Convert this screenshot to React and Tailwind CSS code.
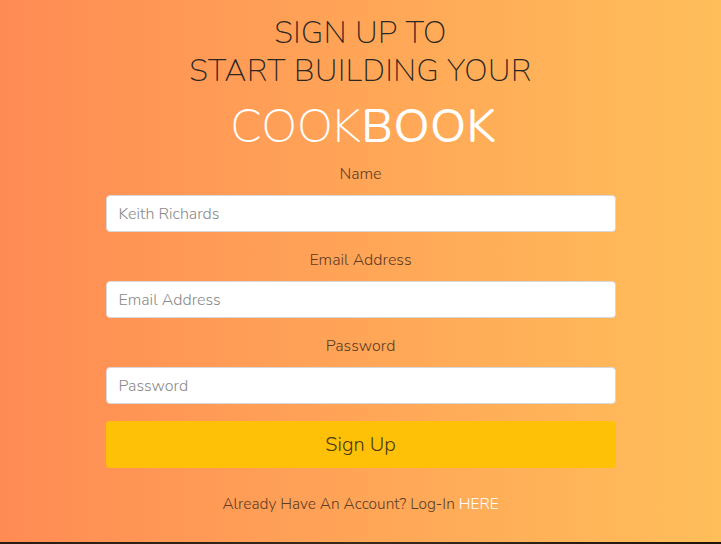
import { useState } from 'react';

export default function App() {
  const [name, setName] = useState('');
  const [email, setEmail] = useState('');
  const [password, setPassword] = useState('');

  return (
    <div
      className="min-h-[544px] flex flex-col bg-gradient-to-r from-[#ff8b54] to-[#ffbe5a]"
      style={{ fontFamily: 'Nunito, Lato, "Open Sans", sans-serif' }}
    >
      <div className="flex-1 flex flex-col items-center pt-[14px]">
        {/* heading */}
        <h1 className="text-center text-[31px] leading-[38px] font-extralight text-[#2a2622] tracking-[0.5px]">
          SIGN UP TO
          <br />
          START BUILDING YOUR
        </h1>
        <div className="mt-[10px] ml-[6px] text-[47px] leading-[54px] text-white tracking-[0.5px]">
          <span className="font-extralight">COOK</span>
          <span className="font-normal">BOOK</span>
        </div>

        <form className="w-[510px] mt-[10px] flex flex-col" onSubmit={(e) => e.preventDefault()}>
          {/* Name */}
          <label className="block text-center text-[16px] leading-[20px] font-light text-[#5e3c25] mb-[11px]">
            Name
          </label>
          <input
            type="text"
            value={name}
            onChange={(e) => setName(e.target.value)}
            placeholder="Keith Richards"
            className="w-full h-[37px] px-[12px] bg-white rounded-[4px] border border-[#d8d8d8] text-[16px] font-light text-[#333] placeholder:text-[#8a8a8a] outline-none"
          />

          {/* Email */}
          <label className="block text-center text-[16px] leading-[20px] font-light text-[#5e3c25] mt-[18px] mb-[11px]">
            Email Address
          </label>
          <input
            type="email"
            value={email}
            onChange={(e) => setEmail(e.target.value)}
            placeholder="Email Address"
            className="w-full h-[37px] px-[12px] bg-white rounded-[4px] border border-[#d8d8d8] text-[16px] font-light text-[#333] placeholder:text-[#8a8a8a] outline-none"
          />

          {/* Password */}
          <label className="block text-center text-[16px] leading-[20px] font-light text-[#5e3c25] mt-[18px] mb-[11px]">
            Password
          </label>
          <input
            type="password"
            value={password}
            onChange={(e) => setPassword(e.target.value)}
            placeholder="Password"
            className="w-full h-[37px] px-[12px] bg-white rounded-[4px] border border-[#d8d8d8] text-[16px] font-light text-[#333] placeholder:text-[#8a8a8a] outline-none"
          />

          <button
            type="submit"
            className="mt-[17px] w-full h-[47px] bg-[#ffc107] rounded-[4px] text-[20px] font-light text-[#4a3a1a]"
          >
            Sign Up
          </button>

          <p className="mt-[26px] text-center text-[15.5px] leading-[20px] font-light text-[#5e3c25]">
            Already Have An Account? Log-In <a href="#" className="text-white">HERE</a>
          </p>
        </form>
      </div>
      <div className="h-[2px] bg-gradient-to-r from-[#2a1a10] via-[#3a2a1c] to-[#1e140c]" />
    </div>
  );
}
